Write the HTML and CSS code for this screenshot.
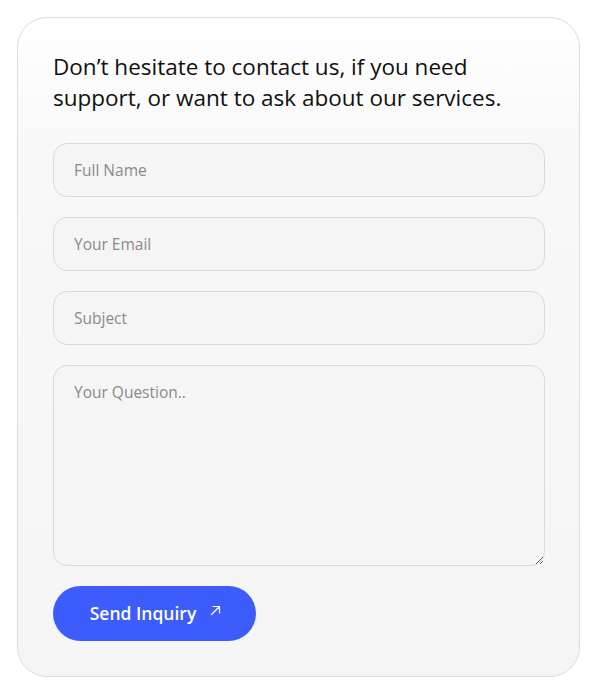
FILE: index.html
```html
<!DOCTYPE html>
<html lang="en">
<head>
<meta charset="utf-8">
<link rel="stylesheet" href="styles.css">
</head>
<body>
<div class="page">
  <form class="card">
    <h2 class="title">Don’t hesitate to contact us, if you need support, or want to ask about our services.</h2>
    <input class="field" type="text" placeholder="Full Name">
    <input class="field" type="email" placeholder="Your Email">
    <input class="field" type="text" placeholder="Subject">
    <textarea class="field area" placeholder="Your Question.."></textarea>
    <button class="send" type="button">Send Inquiry
      <svg class="arrow" width="11" height="11" viewBox="0 0 11 11"><path d="M1.5 9.5 L9.5 1.5 M3 1.5 H9.5 V8" fill="none" stroke="#fff" stroke-width="1.2" stroke-linecap="round" stroke-linejoin="round"/></svg>
    </button>
  </form>
</div>
</body>
</html>
```
FILE: styles.css
```css
* { box-sizing: border-box; }
html, body { margin: 0; padding: 0; background: #fff; }
body { font-family: "Open Sans", "Noto Sans", sans-serif; }
.page { padding: 17px 20px 22px 17px; }
.card {
  width: 563px;
  height: 660px;
  border: 1px solid #dcdcdc;
  border-radius: 30px;
  background: linear-gradient(180deg, #ffffff 0%, #f8f8f8 20%, #f5f5f5 100%);
  padding: 33px 35px 0 35px;
  display: flex;
  flex-direction: column;
  align-items: flex-start;
}
.title {
  margin: 0 0 30px 0;
  font-size: 22.5px;
  line-height: 31px;
  font-weight: 500;
  color: #111;
  letter-spacing: 0;
  width: 455px;
}
.field {
  width: 492px;
  height: 54px;
  border: 1px solid #dadada;
  border-radius: 14px;
  background: #f5f5f5;
  padding: 0 20px;
  font-family: inherit;
  font-size: 15.5px;
  color: #333;
  margin: 0 0 20px 0;
  outline: none;
}
.field::placeholder { color: #8a8a8a; }
.area {
  height: 201px;
  padding-top: 15px;
  resize: vertical;
  margin-bottom: 20px;
}
.send {
  width: 203px;
  height: 55px;
  border: none;
  border-radius: 28px;
  background: #3c5cfb;
  color: #fff;
  font-family: inherit;
  font-size: 17.5px;
  font-weight: 600;
  display: flex;
  align-items: center;
  justify-content: center;
  gap: 14px;
  padding: 0 0 2px 2px;
}
.arrow { margin-top: -5px; }
```
